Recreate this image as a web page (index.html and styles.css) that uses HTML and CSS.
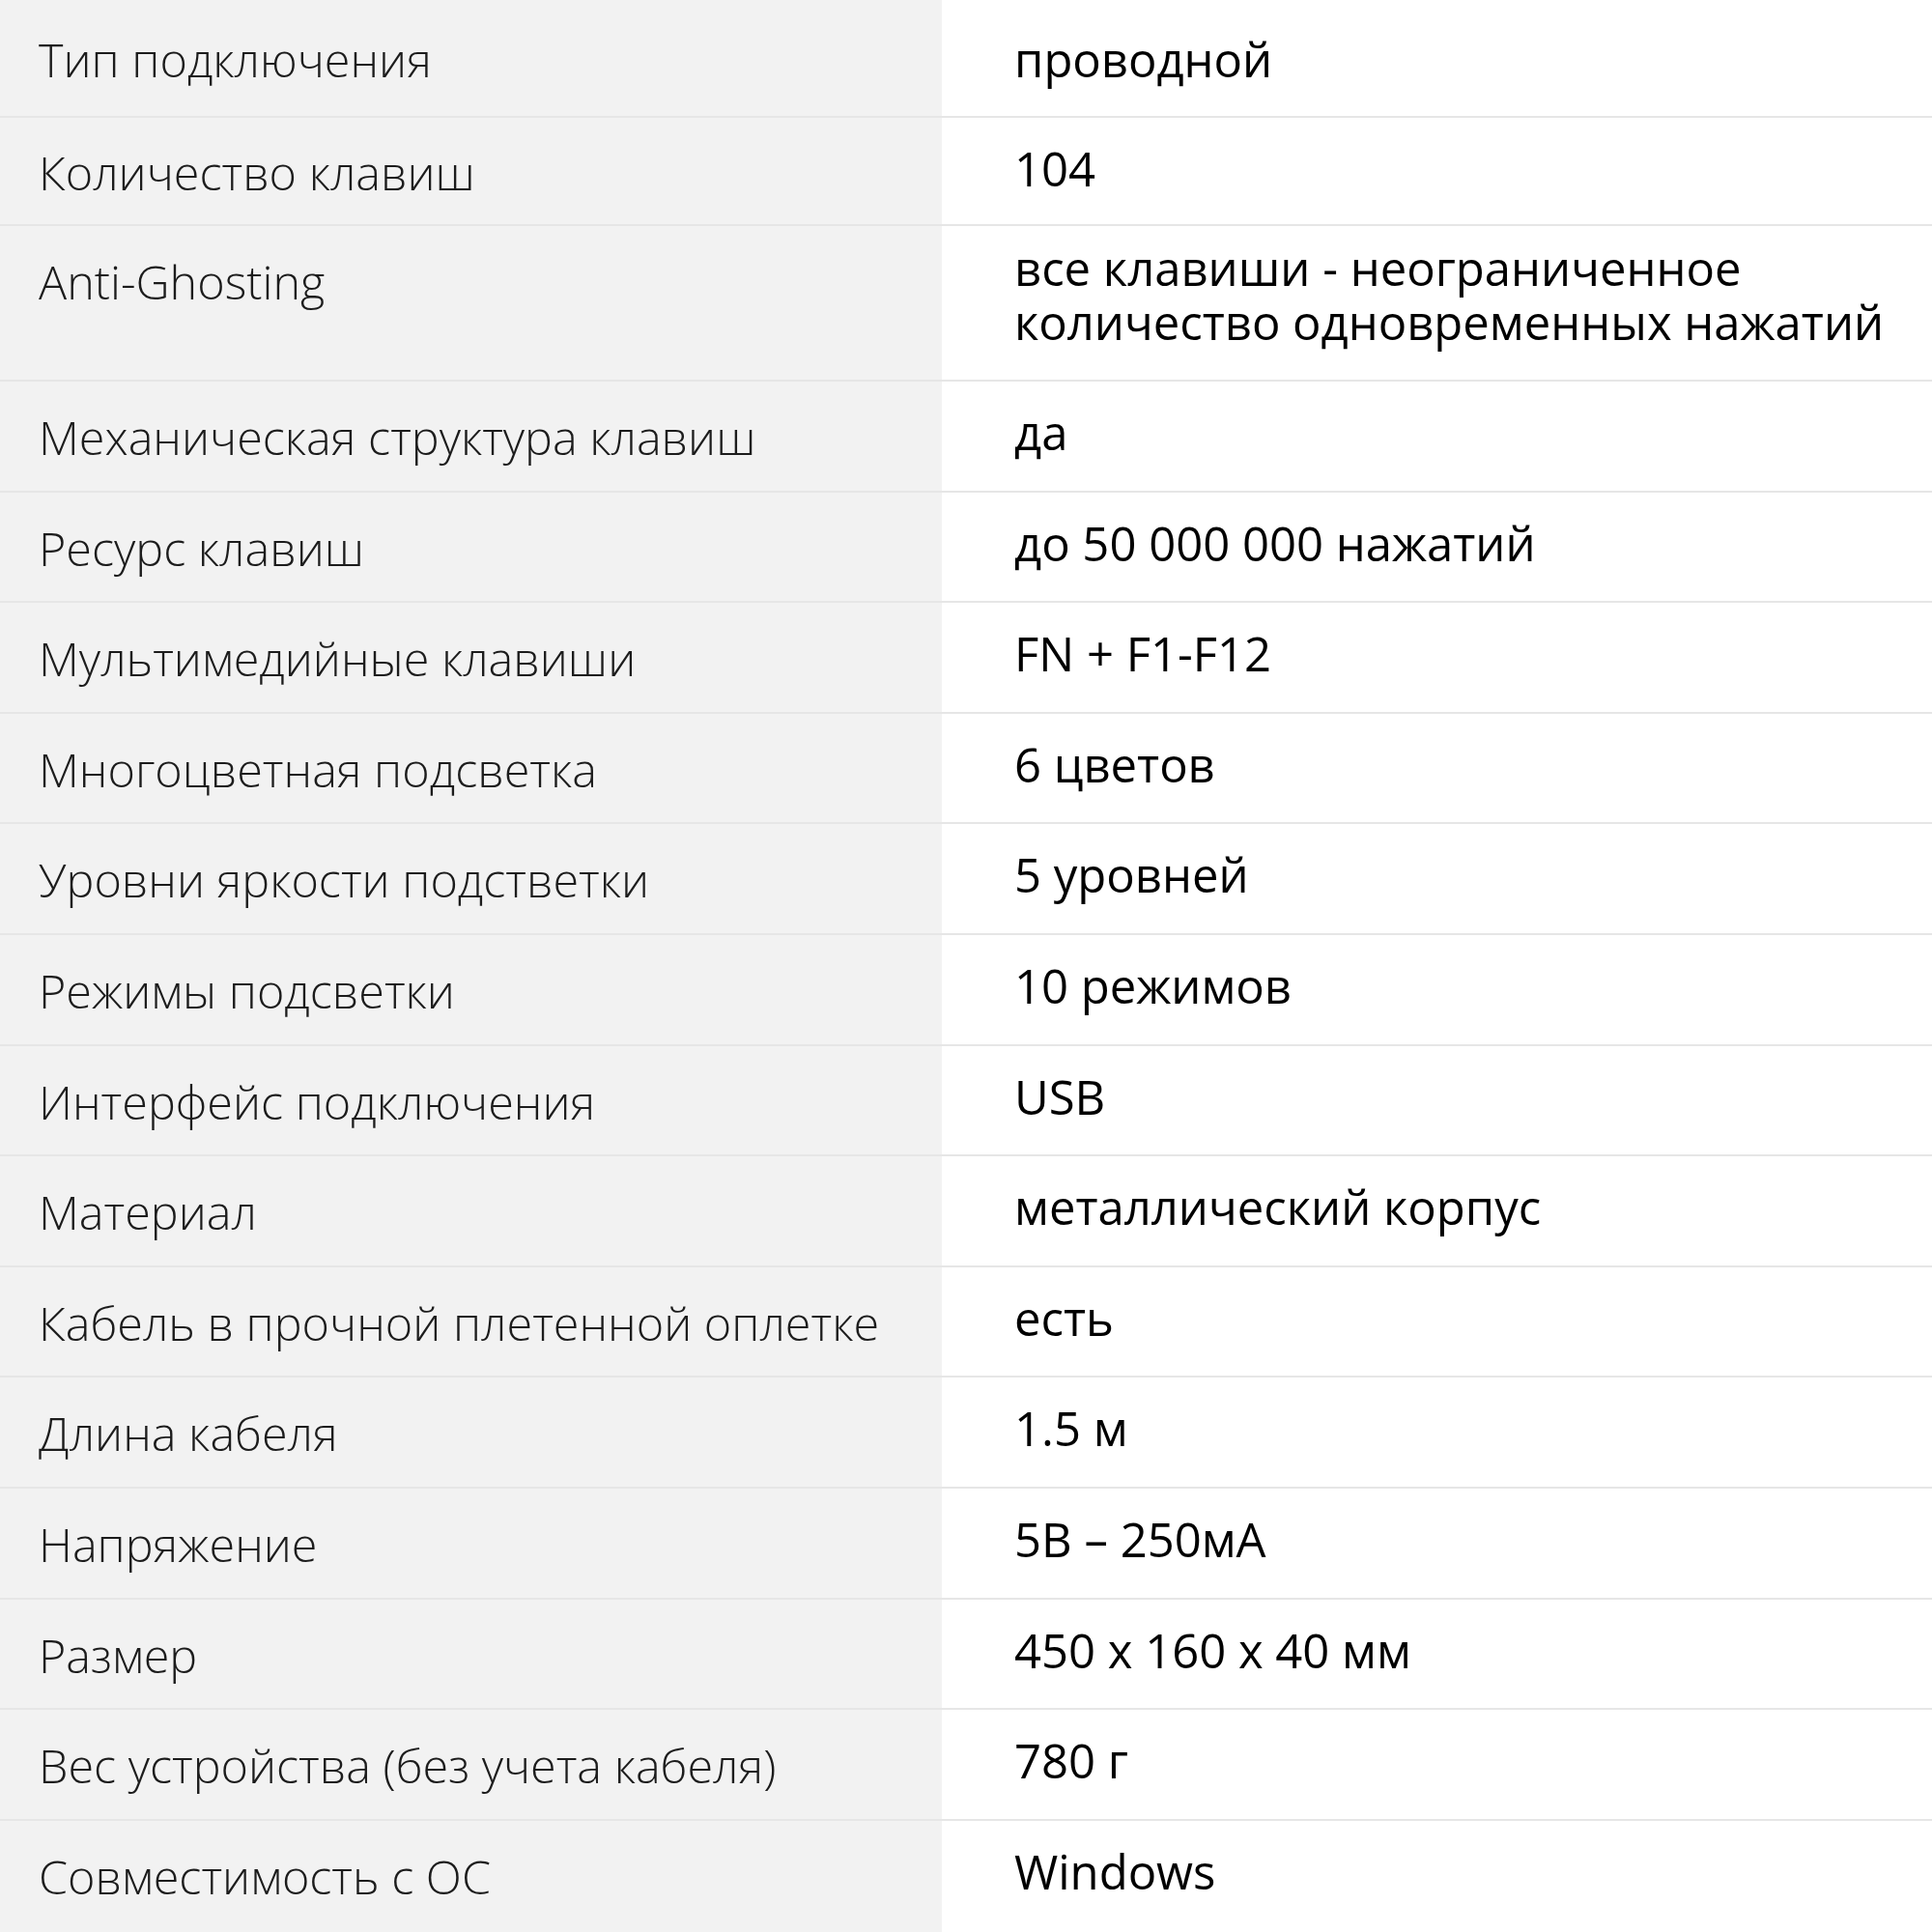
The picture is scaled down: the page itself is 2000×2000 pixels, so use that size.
FILE: index.html
```
<!DOCTYPE html>
<html lang="ru">

<head>
  <meta charset="UTF-8">
  <meta name="viewport" content="width=device-width, initial-scale=1.0">
  <title>Характеристики</title>

  <link rel="stylesheet" href="styles.css">
</head>

<body>

  <!-- таблица характеристик -->
  <div class="specs">
    <div class="spec-row">
      <div class="spec-name">Тип подключения</div>
      <div class="spec-value">проводной</div>
    </div>
    <div class="spec-row">
      <div class="spec-name">Количество клавиш</div>
      <div class="spec-value">104</div>
    </div>
    <div class="spec-row spec-row--multi">
      <div class="spec-name">Anti-Ghosting</div>
      <div class="spec-value">все клавиши - неограниченное<br>количество одновременных нажатий</div>
    </div>
    <div class="spec-row">
      <div class="spec-name">Механическая структура клавиш</div>
      <div class="spec-value">да</div>
    </div>
    <div class="spec-row">
      <div class="spec-name">Ресурс клавиш</div>
      <div class="spec-value">до 50 000 000 нажатий</div>
    </div>
    <div class="spec-row">
      <div class="spec-name">Мультимедийные клавиши</div>
      <div class="spec-value">FN + F1-F12</div>
    </div>
    <div class="spec-row">
      <div class="spec-name">Многоцветная подсветка</div>
      <div class="spec-value">6 цветов</div>
    </div>
    <div class="spec-row">
      <div class="spec-name">Уровни яркости подстветки</div>
      <div class="spec-value">5 уровней</div>
    </div>
    <div class="spec-row">
      <div class="spec-name">Режимы подсветки</div>
      <div class="spec-value">10 режимов</div>
    </div>
    <div class="spec-row">
      <div class="spec-name">Интерфейс подключения</div>
      <div class="spec-value">USB</div>
    </div>
    <div class="spec-row">
      <div class="spec-name">Материал</div>
      <div class="spec-value">металлический корпус</div>
    </div>
    <div class="spec-row">
      <div class="spec-name">Кабель в прочной плетенной оплетке</div>
      <div class="spec-value">есть</div>
    </div>
    <div class="spec-row">
      <div class="spec-name">Длина кабеля</div>
      <div class="spec-value">1.5 м</div>
    </div>
    <div class="spec-row">
      <div class="spec-name">Напряжение</div>
      <div class="spec-value">5В – 250мА</div>
    </div>
    <div class="spec-row">
      <div class="spec-name">Размер</div>
      <div class="spec-value">450 x 160 x 40 мм</div>
    </div>
    <div class="spec-row">
      <div class="spec-name">Вес устройства (без учета кабеля)</div>
      <div class="spec-value">780 г</div>
    </div>
    <div class="spec-row">
      <div class="spec-name">Совместимость с ОС</div>
      <div class="spec-value">Windows</div>
    </div>
  </div>

</body>

</html>
```

FILE: styles.css
```
/* общий фон и шрифт */
body {
  margin: 0;
  background: #fff;
  font-family: "Open Sans", "Noto Sans", sans-serif;
  font-size: 49px;
  line-height: 56px;
  color: #000;
}

.specs {
  /* левая колонка серая до самого низа */
  background: linear-gradient(to right, #f2f2f2 975px, #fff 975px);
  min-height: 2000px;
}

.spec-row {
  display: grid;
  grid-template-columns: 975px 1fr;
  align-items: start;
  box-sizing: border-box;
  min-height: 114.6px;
  border-bottom: 2px solid #e6e6e6;
}

.spec-row:first-child {
  min-height: 122px;
}

.spec-row:nth-child(2) {
  min-height: 112px;
}

.spec-row:last-child {
  border-bottom: 0;
}

/* название параметра */
.spec-name {
  padding: 29px 0 0 40px;
  font-size: 48.5px;
  font-weight: 300;
  color: #1c1c1c;
}

.spec-row:first-child .spec-name {
  padding-top: 33px;
}

.spec-row:nth-child(2) .spec-name {
  padding-top: 28px;
}

/* значение параметра */
.spec-value {
  padding: 24px 0 23px 75px;
  font-weight: 400;
  color: #000;
}

.spec-row:first-child .spec-value {
  padding-top: 33px;
}

/* значение в две строки стоит выше */
.spec-row--multi .spec-value {
  padding-top: 15px;
  padding-bottom: 32px;
}
```
